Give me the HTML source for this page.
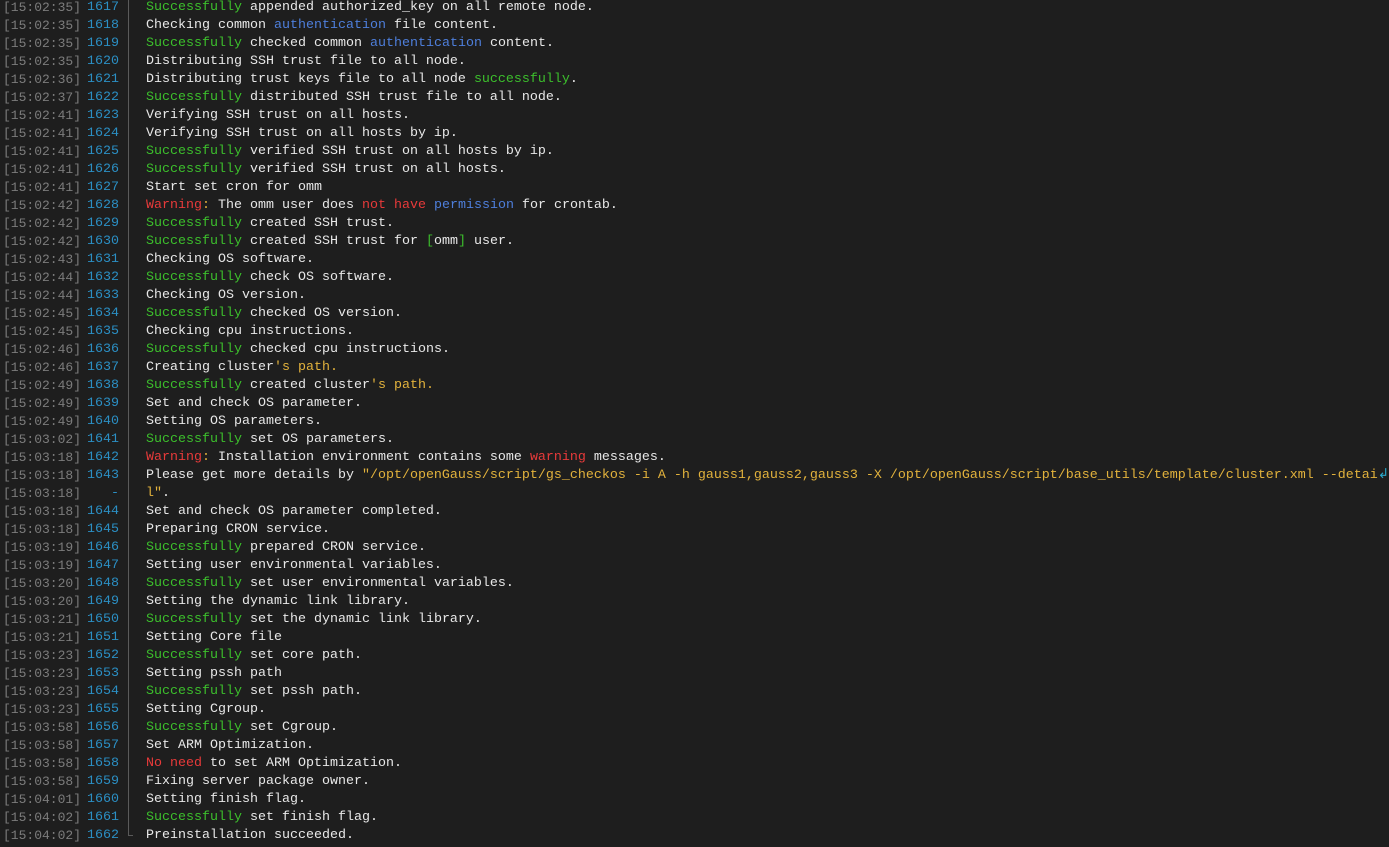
<!DOCTYPE html>
<html><head><meta charset="utf-8"><style>
html,body{margin:0;padding:0;background:#1e1e1e;width:1389px;height:847px;overflow:hidden}
body{font-family:"Liberation Mono",monospace;font-size:13.33px;color:#e8e8e8;position:relative}
#c{position:absolute;left:0;top:2px;width:1389px;height:847px}
.r{position:absolute;left:0;height:18px;line-height:18px;white-space:pre;width:1389px}
.t{position:absolute;left:3px;color:#7c7c7c;font-size:13px}
.n{position:absolute;left:84px;width:35px;text-align:right;color:#2b8fc4}
.x{position:absolute;left:146px}
.g{color:#3cbf2c}.b{color:#4e7fdc}.e{color:#e83a3a}.y{color:#e2b23c}
.bar{position:absolute;left:128px;top:-2px;width:1px;height:836px;background:#5a5a5a}
.tick{position:absolute;left:128px;top:833px;width:5px;height:1px;background:#5a5a5a}
.w{color:#2aa7c9}
</style></head><body><div id="c">
<div class="bar"></div><div class="tick"></div>
<div class="r" style="top:-3px"><span class="t">[15:02:35]</span><span class="n">1617</span><span class="x"><span class="g">Successfully</span> appended authorized_key on all remote node.</span></div>
<div class="r" style="top:15px"><span class="t">[15:02:35]</span><span class="n">1618</span><span class="x">Checking common <span class="b">authentication</span> file content.</span></div>
<div class="r" style="top:33px"><span class="t">[15:02:35]</span><span class="n">1619</span><span class="x"><span class="g">Successfully</span> checked common <span class="b">authentication</span> content.</span></div>
<div class="r" style="top:51px"><span class="t">[15:02:35]</span><span class="n">1620</span><span class="x">Distributing SSH trust file to all node.</span></div>
<div class="r" style="top:69px"><span class="t">[15:02:36]</span><span class="n">1621</span><span class="x">Distributing trust keys file to all node <span class="g">successfully</span>.</span></div>
<div class="r" style="top:87px"><span class="t">[15:02:37]</span><span class="n">1622</span><span class="x"><span class="g">Successfully</span> distributed SSH trust file to all node.</span></div>
<div class="r" style="top:105px"><span class="t">[15:02:41]</span><span class="n">1623</span><span class="x">Verifying SSH trust on all hosts.</span></div>
<div class="r" style="top:123px"><span class="t">[15:02:41]</span><span class="n">1624</span><span class="x">Verifying SSH trust on all hosts by ip.</span></div>
<div class="r" style="top:141px"><span class="t">[15:02:41]</span><span class="n">1625</span><span class="x"><span class="g">Successfully</span> verified SSH trust on all hosts by ip.</span></div>
<div class="r" style="top:159px"><span class="t">[15:02:41]</span><span class="n">1626</span><span class="x"><span class="g">Successfully</span> verified SSH trust on all hosts.</span></div>
<div class="r" style="top:177px"><span class="t">[15:02:41]</span><span class="n">1627</span><span class="x">Start set cron for omm</span></div>
<div class="r" style="top:195px"><span class="t">[15:02:42]</span><span class="n">1628</span><span class="x"><span class="e">Warning</span><span class="y">:</span> The omm user does <span class="e">not have</span> <span class="b">permission</span> for crontab.</span></div>
<div class="r" style="top:213px"><span class="t">[15:02:42]</span><span class="n">1629</span><span class="x"><span class="g">Successfully</span> created SSH trust.</span></div>
<div class="r" style="top:231px"><span class="t">[15:02:42]</span><span class="n">1630</span><span class="x"><span class="g">Successfully</span> created SSH trust for <span class="g">[</span>omm<span class="g">]</span> user.</span></div>
<div class="r" style="top:249px"><span class="t">[15:02:43]</span><span class="n">1631</span><span class="x">Checking OS software.</span></div>
<div class="r" style="top:267px"><span class="t">[15:02:44]</span><span class="n">1632</span><span class="x"><span class="g">Successfully</span> check OS software.</span></div>
<div class="r" style="top:285px"><span class="t">[15:02:44]</span><span class="n">1633</span><span class="x">Checking OS version.</span></div>
<div class="r" style="top:303px"><span class="t">[15:02:45]</span><span class="n">1634</span><span class="x"><span class="g">Successfully</span> checked OS version.</span></div>
<div class="r" style="top:321px"><span class="t">[15:02:45]</span><span class="n">1635</span><span class="x">Checking cpu instructions.</span></div>
<div class="r" style="top:339px"><span class="t">[15:02:46]</span><span class="n">1636</span><span class="x"><span class="g">Successfully</span> checked cpu instructions.</span></div>
<div class="r" style="top:357px"><span class="t">[15:02:46]</span><span class="n">1637</span><span class="x">Creating cluster<span class="y">'s path.</span></span></div>
<div class="r" style="top:375px"><span class="t">[15:02:49]</span><span class="n">1638</span><span class="x"><span class="g">Successfully</span> created cluster<span class="y">'s path.</span></span></div>
<div class="r" style="top:393px"><span class="t">[15:02:49]</span><span class="n">1639</span><span class="x">Set and check OS parameter.</span></div>
<div class="r" style="top:411px"><span class="t">[15:02:49]</span><span class="n">1640</span><span class="x">Setting OS parameters.</span></div>
<div class="r" style="top:429px"><span class="t">[15:03:02]</span><span class="n">1641</span><span class="x"><span class="g">Successfully</span> set OS parameters.</span></div>
<div class="r" style="top:447px"><span class="t">[15:03:18]</span><span class="n">1642</span><span class="x"><span class="e">Warning</span><span class="y">:</span> Installation environment contains some <span class="e">warning</span> messages.</span></div>
<div class="r" style="top:465px"><span class="t">[15:03:18]</span><span class="n">1643</span><span class="x">Please get more details by <span class="y">"/opt/openGauss/script/gs_checkos -i A -h gauss1,gauss2,gauss3 -X /opt/openGauss/script/base_utils/template/cluster.xml --detai</span><span class="w">↲</span></span></div>
<div class="r" style="top:483px"><span class="t">[15:03:18]</span><span class="n">-</span><span class="x"><span class="y">l"</span>.</span></div>
<div class="r" style="top:501px"><span class="t">[15:03:18]</span><span class="n">1644</span><span class="x">Set and check OS parameter completed.</span></div>
<div class="r" style="top:519px"><span class="t">[15:03:18]</span><span class="n">1645</span><span class="x">Preparing CRON service.</span></div>
<div class="r" style="top:537px"><span class="t">[15:03:19]</span><span class="n">1646</span><span class="x"><span class="g">Successfully</span> prepared CRON service.</span></div>
<div class="r" style="top:555px"><span class="t">[15:03:19]</span><span class="n">1647</span><span class="x">Setting user environmental variables.</span></div>
<div class="r" style="top:573px"><span class="t">[15:03:20]</span><span class="n">1648</span><span class="x"><span class="g">Successfully</span> set user environmental variables.</span></div>
<div class="r" style="top:591px"><span class="t">[15:03:20]</span><span class="n">1649</span><span class="x">Setting the dynamic link library.</span></div>
<div class="r" style="top:609px"><span class="t">[15:03:21]</span><span class="n">1650</span><span class="x"><span class="g">Successfully</span> set the dynamic link library.</span></div>
<div class="r" style="top:627px"><span class="t">[15:03:21]</span><span class="n">1651</span><span class="x">Setting Core file</span></div>
<div class="r" style="top:645px"><span class="t">[15:03:23]</span><span class="n">1652</span><span class="x"><span class="g">Successfully</span> set core path.</span></div>
<div class="r" style="top:663px"><span class="t">[15:03:23]</span><span class="n">1653</span><span class="x">Setting pssh path</span></div>
<div class="r" style="top:681px"><span class="t">[15:03:23]</span><span class="n">1654</span><span class="x"><span class="g">Successfully</span> set pssh path.</span></div>
<div class="r" style="top:699px"><span class="t">[15:03:23]</span><span class="n">1655</span><span class="x">Setting Cgroup.</span></div>
<div class="r" style="top:717px"><span class="t">[15:03:58]</span><span class="n">1656</span><span class="x"><span class="g">Successfully</span> set Cgroup.</span></div>
<div class="r" style="top:735px"><span class="t">[15:03:58]</span><span class="n">1657</span><span class="x">Set ARM Optimization.</span></div>
<div class="r" style="top:753px"><span class="t">[15:03:58]</span><span class="n">1658</span><span class="x"><span class="e">No need</span> to set ARM Optimization.</span></div>
<div class="r" style="top:771px"><span class="t">[15:03:58]</span><span class="n">1659</span><span class="x">Fixing server package owner.</span></div>
<div class="r" style="top:789px"><span class="t">[15:04:01]</span><span class="n">1660</span><span class="x">Setting finish flag.</span></div>
<div class="r" style="top:807px"><span class="t">[15:04:02]</span><span class="n">1661</span><span class="x"><span class="g">Successfully</span> set finish flag.</span></div>
<div class="r" style="top:825px"><span class="t">[15:04:02]</span><span class="n">1662</span><span class="x">Preinstallation succeeded.</span></div>
</div></body></html>
